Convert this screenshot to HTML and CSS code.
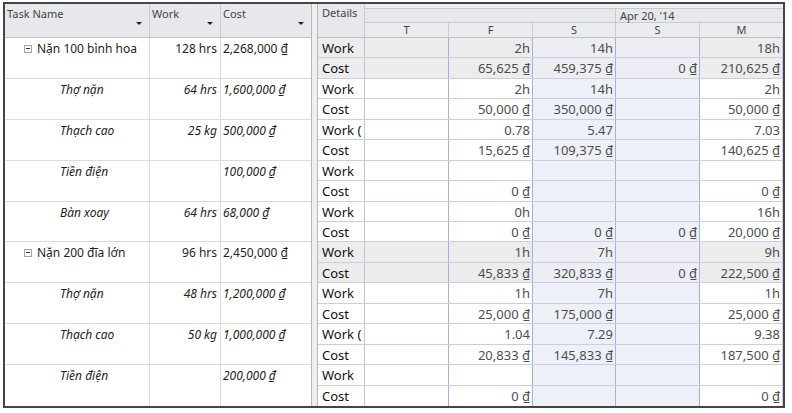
FILE: index.html
```html
<!DOCTYPE html>
<html lang="vi">
  <head>
    <meta charset="UTF-8" />
    <meta name="viewport" content="width=device-width, initial-scale=1.0" />
    <title>Task Usage</title>
    <link rel="stylesheet" href="styles.css">
  </head>
  <body>
    <div class="view">
      <!-- Task sheet -->
      <div class="sheet">
        <div class="sheet-head">
          <div class="col-head col-name"><span>Task Name</span><i class="drop"></i></div>
          <div class="col-head col-work"><span>Work</span><i class="drop"></i></div>
          <div class="col-head col-cost"><span>Cost</span><i class="drop"></i></div>
        </div>
        <div class="sheet-body">
          <div class="task summary">
            <div class="cell col-name"><span class="toggle"></span>Nặn 100 bình hoa</div>
            <div class="cell col-work">128 hrs</div>
            <div class="cell col-cost">2,268,000 ₫</div>
          </div>
          <div class="task resource">
            <div class="cell col-name">Thợ nặn</div>
            <div class="cell col-work">64 hrs</div>
            <div class="cell col-cost">1,600,000 ₫</div>
          </div>
          <div class="task resource">
            <div class="cell col-name">Thạch cao</div>
            <div class="cell col-work">25 kg</div>
            <div class="cell col-cost">500,000 ₫</div>
          </div>
          <div class="task resource">
            <div class="cell col-name">Tiền điện</div>
            <div class="cell col-work"></div>
            <div class="cell col-cost">100,000 ₫</div>
          </div>
          <div class="task resource">
            <div class="cell col-name">Bàn xoay</div>
            <div class="cell col-work">64 hrs</div>
            <div class="cell col-cost">68,000 ₫</div>
          </div>
          <div class="task summary">
            <div class="cell col-name"><span class="toggle"></span>Nặn 200 đĩa lớn</div>
            <div class="cell col-work">96 hrs</div>
            <div class="cell col-cost">2,450,000 ₫</div>
          </div>
          <div class="task resource">
            <div class="cell col-name">Thợ nặn</div>
            <div class="cell col-work">48 hrs</div>
            <div class="cell col-cost">1,200,000 ₫</div>
          </div>
          <div class="task resource">
            <div class="cell col-name">Thạch cao</div>
            <div class="cell col-work">50 kg</div>
            <div class="cell col-cost">1,000,000 ₫</div>
          </div>
          <div class="task resource">
            <div class="cell col-name">Tiền điện</div>
            <div class="cell col-work"></div>
            <div class="cell col-cost">200,000 ₫</div>
          </div>
        </div>
      </div>

      <div class="splitter"></div>

      <!-- Usage timescale -->
      <div class="usage">
        <div class="usage-head">
          <div class="details-head">Details</div>
          <div class="tiers">
            <div class="tier tier-top"></div>
            <div class="tier tier-week">
              <div class="week-cell week-prev"></div>
              <div class="week-cell">Apr 20, '14</div>
            </div>
            <div class="tier tier-days">
              <div class="day">T</div>
              <div class="day">F</div>
              <div class="day">S</div>
              <div class="day">S</div>
              <div class="day">M</div>
            </div>
          </div>
        </div>
        <div class="usage-body">
          <div class="urow summary"><div class="label">Work</div><div class="v"></div><div class="v">2h</div><div class="v off">14h</div><div class="v off"></div><div class="v">18h</div></div>
          <div class="urow summary"><div class="label">Cost</div><div class="v"></div><div class="v">65,625 ₫</div><div class="v off">459,375 ₫</div><div class="v off">0 ₫</div><div class="v">210,625 ₫</div></div>
          <div class="urow"><div class="label">Work</div><div class="v"></div><div class="v">2h</div><div class="v off">14h</div><div class="v off"></div><div class="v">2h</div></div>
          <div class="urow"><div class="label">Cost</div><div class="v"></div><div class="v">50,000 ₫</div><div class="v off">350,000 ₫</div><div class="v off"></div><div class="v">50,000 ₫</div></div>
          <div class="urow"><div class="label">Work (</div><div class="v"></div><div class="v">0.78</div><div class="v off">5.47</div><div class="v off"></div><div class="v">7.03</div></div>
          <div class="urow"><div class="label">Cost</div><div class="v"></div><div class="v">15,625 ₫</div><div class="v off">109,375 ₫</div><div class="v off"></div><div class="v">140,625 ₫</div></div>
          <div class="urow"><div class="label">Work</div><div class="v"></div><div class="v"></div><div class="v off"></div><div class="v off"></div><div class="v"></div></div>
          <div class="urow"><div class="label">Cost</div><div class="v"></div><div class="v">0 ₫</div><div class="v off"></div><div class="v off"></div><div class="v">0 ₫</div></div>
          <div class="urow"><div class="label">Work</div><div class="v"></div><div class="v">0h</div><div class="v off"></div><div class="v off"></div><div class="v">16h</div></div>
          <div class="urow"><div class="label">Cost</div><div class="v"></div><div class="v">0 ₫</div><div class="v off">0 ₫</div><div class="v off">0 ₫</div><div class="v">20,000 ₫</div></div>
          <div class="urow summary"><div class="label">Work</div><div class="v"></div><div class="v">1h</div><div class="v off">7h</div><div class="v off"></div><div class="v">9h</div></div>
          <div class="urow summary"><div class="label">Cost</div><div class="v"></div><div class="v">45,833 ₫</div><div class="v off">320,833 ₫</div><div class="v off">0 ₫</div><div class="v">222,500 ₫</div></div>
          <div class="urow"><div class="label">Work</div><div class="v"></div><div class="v">1h</div><div class="v off">7h</div><div class="v off"></div><div class="v">1h</div></div>
          <div class="urow"><div class="label">Cost</div><div class="v"></div><div class="v">25,000 ₫</div><div class="v off">175,000 ₫</div><div class="v off"></div><div class="v">25,000 ₫</div></div>
          <div class="urow"><div class="label">Work (</div><div class="v"></div><div class="v">1.04</div><div class="v off">7.29</div><div class="v off"></div><div class="v">9.38</div></div>
          <div class="urow"><div class="label">Cost</div><div class="v"></div><div class="v">20,833 ₫</div><div class="v off">145,833 ₫</div><div class="v off"></div><div class="v">187,500 ₫</div></div>
          <div class="urow"><div class="label">Work</div><div class="v"></div><div class="v"></div><div class="v off"></div><div class="v off"></div><div class="v"></div></div>
          <div class="urow"><div class="label">Cost</div><div class="v"></div><div class="v">0 ₫</div><div class="v off"></div><div class="v off"></div><div class="v">0 ₫</div></div>
        </div>
      </div>
    </div>
  </body>
</html>
```

FILE: styles.css
```css
* {
  margin: 0;
  padding: 0;
  box-sizing: border-box;
}

body {
  font-family: "Noto Sans", sans-serif;
  background: #ffffff;
  color: #1e1e1e;
}

.view {
  display: flex;
  width: 782px;
  height: 406px;
  margin: 2px 0 0 3px;
  border: 2px solid #454545;
}

/* left sheet */
.sheet {
  width: 307px;
  display: flex;
  flex-direction: column;
  border-right: 1px solid #b9b9b9;
}

.sheet-head {
  display: flex;
  height: 34px;
  background: #e6e8eb;
  border-bottom: 1px solid #c2c2c2;
}

.col-name {
  width: 145px;
}
.col-work {
  width: 71px;
}
.col-cost {
  width: 90px;
}

.col-head {
  display: flex;
  justify-content: space-between;
  font-size: 11px;
  color: #444;
  padding: 2px 0 0 2px;
  border-right: 1px solid #c9cbce;
}
.col-head.col-cost {
  border-right: none;
}

.drop {
  align-self: center;
  margin: 3px 7px 0 0;
  width: 0;
  height: 0;
  border-left: 3px solid transparent;
  border-right: 3px solid transparent;
  border-top: 3px solid #222;
}

.sheet-body {
  flex: 1;
  min-height: 0;
  display: grid;
  grid-template-rows: repeat(9, minmax(0, 1fr));
}

.task {
  display: flex;
  border-bottom: 1px solid #dcdcdc;
  font-size: 12px;
  line-height: 21px;
}
.task:last-child {
  border-bottom: none;
}

.cell {
  border-right: 1px solid #dcdcdc;
  white-space: nowrap;
  overflow: hidden;
}
.cell.col-cost {
  border-right: none;
  padding-left: 2px;
}
.cell.col-work {
  text-align: right;
  padding-right: 3px;
}

.summary .col-name {
  display: flex;
  align-items: flex-start;
  padding-left: 19px;
}

.resource .cell {
  font-style: italic;
}
.resource .col-name {
  padding-left: 55px;
}

.toggle {
  position: relative;
  width: 8px;
  height: 8px;
  margin: 7px 5px 0 0;
  border: 1px solid #a4a4a4;
  background: #fbfbfb;
}
.toggle::after {
  content: "";
  position: absolute;
  left: 1px;
  top: 2px;
  width: 4px;
  height: 1px;
  background: #333;
}

.splitter {
  width: 6px;
  background: #efefef;
  border-right: 1px solid #b9b9b9;
}

/* right usage grid */
.usage {
  width: 465px;
  display: flex;
  flex-direction: column;
}

.usage-head {
  display: flex;
  height: 34px;
  background: #e6e8eb;
  border-bottom: 1px solid #c2c2c2;
  font-size: 11px;
  color: #444;
}

.details-head {
  width: 47px;
  padding: 1px 0 0 4px;
  border-right: 1px solid #c9cbce;
}

.tiers {
  flex: 1;
  display: flex;
  flex-direction: column;
}

.tier {
  display: flex;
  border-bottom: 1px solid #c9cbce;
}
.tier-top {
  height: 5px;
  background: #eceef0;
}
.tier-week {
  height: 14px;
  line-height: 13px;
}
.tier-days {
  flex: 1;
  border-bottom: none;
  background: #eaecef;
  line-height: 14px;
}

.week-cell {
  flex: 1;
  padding-left: 4px;
}
.week-prev {
  flex: none;
  width: 251px;
  border-right: 1px solid #c9cbce;
}

.day {
  text-align: center;
  border-right: 1px solid #c9cbce;
}
.day:nth-child(1),
.day:nth-child(2),
.day:nth-child(4) {
  width: 84px;
}
.day:nth-child(3),
.day:nth-child(5) {
  width: 83px;
}
.day:last-child {
  border-right: none;
}

.usage-body {
  flex: 1;
  min-height: 0;
  display: grid;
  grid-template-rows: repeat(18, minmax(0, 1fr));
}

.urow {
  display: grid;
  grid-template-columns: 47px 84px 84px 83px 84px 83px;
  border-bottom: 1px solid #c9cde6;
  font-size: 13px;
  line-height: 20px;
  overflow: hidden;
}
.urow:last-child {
  border-bottom: none;
}

.label {
  padding-left: 4px;
  color: #111;
  border-right: 1px solid #c4c6cc;
}

.v {
  text-align: right;
  padding-right: 2px;
  color: #4d4d4d;
  border-right: 1px solid #a9b0d8;
  white-space: nowrap;
}
.v:last-child {
  border-right: 1px solid #c9cde6;
}

.v.off {
  background: #eef0f7;
}

.urow.summary .label,
.urow.summary .v {
  background: #ececec;
}
.urow.summary .v.off {
  background: #eceef4;
}
```
